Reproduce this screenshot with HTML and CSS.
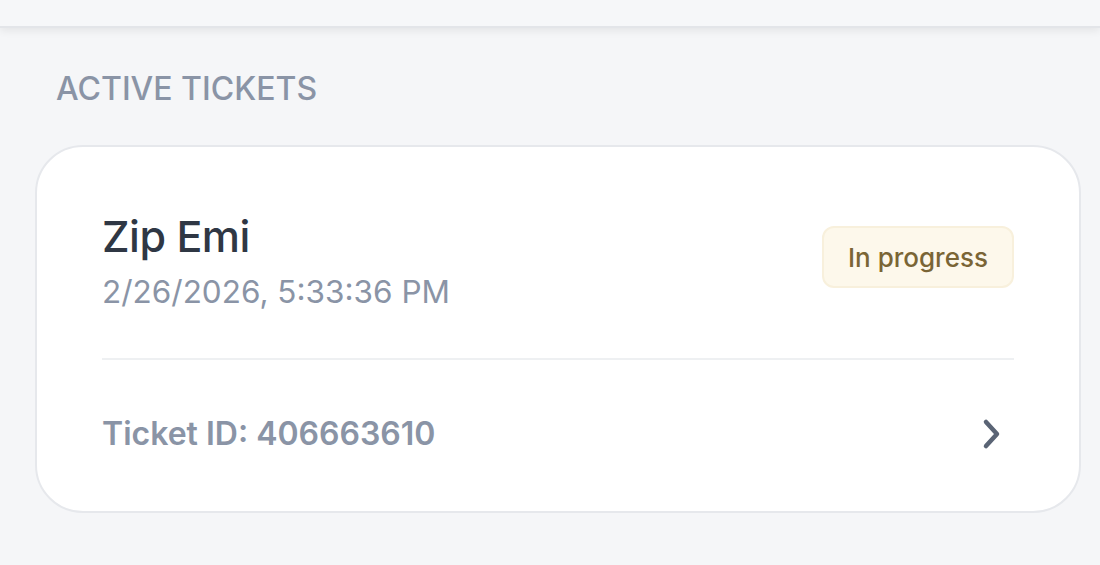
FILE: index.html
```html
<!DOCTYPE html>
<html>
<head>
<meta charset="utf-8">
<link rel="stylesheet" href="styles.css">
</head>
<body>
<div class="topbar"></div>
<main class="content">
  <h2 class="section-title">ACTIVE TICKETS</h2>
  <div class="card">
    <div class="card-head">
      <div class="info">
        <div class="name">Zip Emi</div>
        <div class="date">2/26/2026, 5:33:36 PM</div>
      </div>
      <span class="badge">In progress</span>
    </div>
    <div class="divider"></div>
    <div class="card-foot">
      <span class="ticket-id">Ticket ID: 406663610</span>
      <svg class="chev" width="22" height="32" viewBox="0 0 22 32"><path d="M5 4 L16 16 L5 28" fill="none" stroke="#5a6475" stroke-width="4.5" stroke-linecap="round" stroke-linejoin="round"/></svg>
    </div>
  </div>
</main>
</body>
</html>
```
FILE: styles.css
```css
* { box-sizing: border-box; }
html, body { margin: 0; padding: 0; }
body {
  background: #f5f6f8;
  font-family: Inter, "Open Sans", sans-serif;
  width: 1100px;
  height: 565px;
  overflow: hidden;
}
.topbar {
  height: 28px;
  background: #f6f7f9;
  border-bottom: 2px solid #e3e5e9;
  box-shadow: 0 3px 8px rgba(0,0,0,0.07);
}
.content {
  padding: 0 19px 0 35px;
}
.section-title {
  margin: 44px 0 0 21px;
  font-size: 32px;
  font-weight: 500;
  color: #8a94a6;
  letter-spacing: 0;
  line-height: 34px;
}
.card {
  margin-top: 39px;
  background: #fff;
  border: 2px solid #e6e8ec;
  border-radius: 48px;
  padding: 63px 65px 0 65px;
  height: 368px;
}
.card-head {
  display: flex;
  justify-content: space-between;
  align-items: flex-start;
}
.name {
  font-size: 43px;
  font-weight: 500;
  color: #2f3744;
  line-height: 52px;
  letter-spacing: -0.5px;
}
.date {
  font-size: 31.5px;
  color: #8a94a6;
  line-height: 40px;
  margin-top: 10px;
}
.badge {
  display: inline-flex;
  align-items: center;
  justify-content: center;
  width: 192px;
  height: 62px;
  background: #fdf8eb;
  border: 2px solid #f8f0dc;
  border-radius: 12px;
  color: #7a6535;
  font-size: 26px;
  font-weight: 500;
  margin-top: 16px;
}
.divider {
  height: 2px;
  background: #eef0f2;
  margin-top: 46px;
}
.card-foot {
  display: flex;
  justify-content: space-between;
  align-items: center;
  margin-top: 54px;
}
.ticket-id {
  font-size: 32px;
  font-weight: 600;
  color: #8a94a6;
}
.chev { margin-right: 11px; }
```
